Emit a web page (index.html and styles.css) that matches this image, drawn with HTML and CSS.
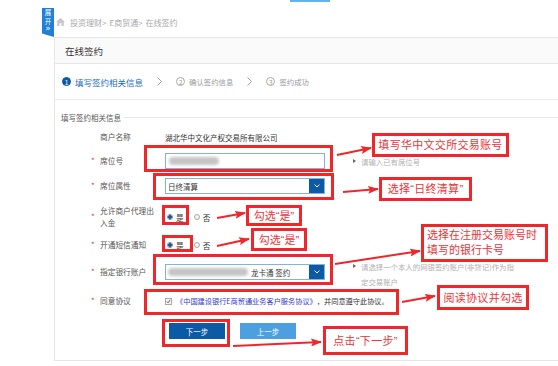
FILE: index.html
```html
<!DOCTYPE html>
<html lang="zh-CN">
<head>
<meta charset="utf-8">
<title>在线签约</title>
<link rel="stylesheet" href="styles.css">
</head>
<body>
<div class="page">
  <div class="topline"></div>
  <div class="fold"><span>展</span><span>开</span><span class="fold-arrow">»</span></div>
  <div class="crumb">
    <svg class="home" viewBox="0 0 10 9" width="9" height="8"><path d="M5 0 L10 4.6 H8.6 V9 H6.2 V6 H3.8 V9 H1.4 V4.6 H0 Z" fill="#c6c6c6"/></svg>
    <span>投资理财&gt;</span><span>E商贸通&gt;</span><span>在线签约</span>
  </div>
  <div class="panel">
    <div class="panel-head">在线签约</div>
    <div class="steps">
      <span class="step active"><i>1</i>填写签约相关信息</span>
      <svg class="chev" viewBox="0 0 5 9" width="5" height="9"><polyline points="0.5,0.5 4.5,4.5 0.5,8.5" fill="none" stroke="#9a9a9a" stroke-width="0.9"/></svg>
      <span class="step"><i>2</i>确认签约信息</span>
      <svg class="chev" viewBox="0 0 5 9" width="5" height="9"><polyline points="0.5,0.5 4.5,4.5 0.5,8.5" fill="none" stroke="#9a9a9a" stroke-width="0.9"/></svg>
      <span class="step"><i>3</i>签约成功</span>
    </div>
    <div class="section">
      <div class="legend"><span>填写签约相关信息</span></div>
      <div class="form">
        <span class="star"></span><span class="label">商户名称</span><span class="value">湖北华中文化产权交易所有限公司</span><span class="hint"></span>

        <span class="star">*</span><span class="label">席位号</span>
        <span class="input"><span class="blur blur-seat"></span></span>
        <span class="hint"><b class="tri"></b>请输入已有席位号</span>

        <span class="star">*</span><span class="label">席位属性</span>
        <span class="select"><span class="sel-text">日终清算</span><span class="dd"><svg viewBox="0 0 6 4" width="6" height="4"><polyline points="0.6,0.6 3,3 5.4,0.6" fill="none" stroke="#fff" stroke-width="1"/></svg></span></span>
        <span class="hint"></span>

        <span class="star">*</span><span class="label two">允许商户代理出<br>入金</span>
        <span class="radios"><span class="radio on"></span>是<span class="radio off"></span>否</span>
        <span class="hint"></span>

        <span class="star">*</span><span class="label">开通短信通知</span>
        <span class="radios"><span class="radio on"></span>是<span class="radio off"></span>否</span>
        <span class="hint"></span>

        <span class="star">*</span><span class="label">指定银行账户</span>
        <span class="select"><span class="blur blur-bank"></span><span class="sel-text bank">龙卡通 签约</span><span class="dd"><svg viewBox="0 0 6 4" width="6" height="4"><polyline points="0.6,0.6 3,3 5.4,0.6" fill="none" stroke="#fff" stroke-width="1"/></svg></span></span>
        <span class="hint hint-two"><b class="tri"></b><span>请选择一个本人的网银签约账户(非贷记)作为指<br>定交易账户</span></span>

        <span class="star">*</span><span class="label">同意协议</span>
        <span class="agree"><span class="check"><svg viewBox="0 0 6 6" width="5" height="5"><polyline points="1,3 2.5,4.6 5,1" fill="none" stroke="#3a3a3a" stroke-width="0.9"/></svg></span><a class="link">《中国建设银行E商贸通业务客户服务协议》</a>，并同意遵守此协议。</span>
        <span class="hint"></span>
      </div>
      <div class="actions"><span class="btn primary">下一步</span><span class="btn light">上一步</span></div>
    </div>
  </div>

  <div class="notes">
    <div class="hl hl-seat"></div>
    <div class="hl hl-attr"></div>
    <div class="hl hl-r1"></div>
    <div class="hl hl-r2"></div>
    <div class="hl hl-bank"></div>
    <div class="hl hl-agree"></div>
    <div class="hl hl-next"></div>

    <div class="note note-a">填写华中文交所交易账号</div>
    <div class="note note-b">选择“日终清算”</div>
    <div class="note note-c">勾选“是”</div>
    <div class="note note-d">勾选“是”</div>
    <div class="note note-e">选择在注册交易账号时<br>填写的银行卡号</div>
    <div class="note note-f">阅读协议并勾选</div>
    <div class="note note-g">点击“下一步”</div>

    <svg class="arrows" viewBox="0 0 558 366" width="558" height="366">
      <defs>
        <marker id="ah" viewBox="0 0 11 8" markerWidth="11" markerHeight="8" refX="10" refY="4" orient="auto" markerUnits="userSpaceOnUse">
          <path d="M0 0 L11 4 L0 8 L2 4 Z" fill="#f0262b"/>
        </marker>
      </defs>
      <g stroke="#f0262b" stroke-width="2" marker-end="url(#ah)">
        <line x1="337" y1="155" x2="371" y2="148"/>
        <line x1="343" y1="192" x2="378" y2="189"/>
        <line x1="217" y1="218" x2="245" y2="213"/>
        <line x1="217" y1="246" x2="249" y2="239"/>
        <line x1="335" y1="264" x2="420" y2="251"/>
        <line x1="402" y1="302" x2="435" y2="296"/>
        <line x1="233" y1="346" x2="321" y2="342"/>
      </g>
    </svg>
  </div>
</div>
</body>
</html>
```

FILE: styles.css
```css
* { box-sizing: border-box; margin: 0; padding: 0; }
body {
  margin: 0;
  background: #fff;
  font-family: "Noto Sans CJK SC", "Noto Sans", sans-serif;
  color: #333;
}
.page {
  position: relative;
  width: 558px;
  height: 366px;
  overflow: hidden;
}
.topline {
  margin-left: 290px;
  width: 40px;
  height: 2px;
  background: #62b3ec;
}
.fold {
  position: absolute;
  left: 42px;
  top: 8px;
  width: 12px;
  height: 29px;
  background: #1f80d6;
  clip-path: polygon(0 0, 100% 0, 100% 100%, 0 88%);
  display: flex;
  flex-direction: column;
  align-items: center;
  color: #fff;
  font-size: 6.5px;
  line-height: 8.5px;
  padding-top: 0;
}
.fold-arrow { font-size: 8px; line-height: 8px; font-family: "DejaVu Sans", sans-serif; }
.crumb {
  height: 35px;
  padding: 5px 0 0 56px;
  display: flex;
  align-items: center;
  gap: 3px;
  font-size: 8px;
  color: #a8a8a8;
}
.home { margin-right: 2px; }
.panel {
  margin-left: 54px;
  height: 324px;
  border: 1px solid #e6e6e6;
  border-right: 0;
}
.panel-head {
  height: 26px;
  background: #fafafa;
  border-bottom: 1px solid #e6e6e6;
  display: flex;
  align-items: center;
  padding-left: 10px;
  font-size: 9.5px;
  color: #333;
}
.steps {
  height: 36px;
  border-bottom: 1px solid #ececec;
  display: flex;
  align-items: center;
  padding-left: 7px;
}
.step {
  display: flex;
  align-items: center;
  color: #9a9a9a;
  font-size: 7.4px;
}
.step i {
  font-style: normal;
  width: 9px;
  height: 9px;
  border-radius: 50%;
  border: 1px solid #aaa;
  display: flex;
  align-items: center;
  justify-content: center;
  font-size: 6.5px;
  margin-right: 4px;
  color: #999;
}
.step.active { color: #1b6dbf; font-size: 8.5px; }
.step.active i { background: #0b5aa6; border-color: #0b5aa6; color: #fff; }
.chev { margin: 0 14px; }

.section { padding: 11px 0 0 6px; }
.legend {
  display: flex;
  align-items: center;
  height: 12px;
  font-size: 7.5px;
  color: #555;
}
.legend::after {
  content: "";
  flex: 1;
  height: 1px;
  background: #e8e8e8;
  margin-left: 3px;
}
.form {
  display: grid;
  grid-template-columns: 10px 65px 160px 1fr;
  grid-template-rows: 20px 28px 22px 40px 16px 38px 20px;
  margin: 4px 0 0 29px;
  align-items: center;
  font-size: 7.7px;
  color: #555;
}
.star { color: #e8353a; font-size: 8px; padding-left: 1px; line-height: 8px; }
.label { line-height: 12px; }
.value { color: #333; font-size: 7.5px; white-space: nowrap; }
.hint {
  padding-left: 28px;
  font-size: 7.4px;
  color: #b0b0b0;
  display: flex;
  align-items: center;
  line-height: 15px;
}
.hint-two { align-items: flex-start; padding-top: 3px; }
.tri {
  width: 0;
  height: 0;
  border-top: 2.5px solid transparent;
  border-bottom: 2.5px solid transparent;
  border-left: 3px solid #666;
  margin-right: 5px;
}
.hint-two .tri { margin-top: 5px; }
.input {
  position: relative;
  height: 16px;
  border: 1px solid #86b0de;
  background: #fff;
}
.blur {
  display: block;
  background: #c4c4c4;
  filter: blur(1.6px);
  border-radius: 4px;
}
.blur-seat { position: absolute; left: 3px; top: 3px; width: 50px; height: 8px; }
.select {
  height: 16px;
  border: 1px solid #86b0de;
  display: flex;
  align-items: center;
  padding-left: 2px;
  font-size: 7.5px;
  color: #333;
}
.blur-bank { width: 80px; height: 8px; margin-right: 3px; }
.dd {
  margin-left: auto;
  width: 15px;
  height: 100%;
  background: #0b5aa6;
  display: flex;
  align-items: center;
  justify-content: center;
}
.radios {
  display: flex;
  align-items: center;
  color: #333;
  font-size: 7.7px;
  padding-left: 2px;
}
.radio {
  width: 6px;
  height: 6px;
  border-radius: 50%;
  border: 1px solid #aaa;
  margin-right: 3px;
  background: #f4f4f4;
}
.radio.on { border-color: #888; background: radial-gradient(circle, #0b5aa6 0 1.6px, #fff 1.9px); }
.radio.off { margin-left: 10px; }
.agree {
  display: flex;
  align-items: center;
  white-space: nowrap;
  font-size: 7.2px;
  color: #333;
}
.check {
  width: 7px;
  height: 7px;
  border: 1px solid #aaa;
  background: #f2f2f2;
  display: flex;
  align-items: center;
  justify-content: center;
  margin-right: 4px;
}
.link { color: #3238d0; }
.actions {
  display: flex;
  gap: 15px;
  margin: 12px 0 0 108px;
}
.btn {
  width: 56px;
  height: 16px;
  font-size: 7.5px;
  color: #fff;
  display: flex;
  align-items: center;
  justify-content: center;
}
.primary { background: #0b5aa6; }
.light { background: #4ca0e0; }

/* annotation layer */
.notes { position: absolute; inset: 0; pointer-events: none; }
.arrows { position: absolute; left: 0; top: 0; }
.hl { position: absolute; border: 3px solid #f0262b; }
.hl-seat { left: 144px; top: 145px; width: 189px; height: 27px; }
.hl-attr { left: 153px; top: 173px; width: 181px; height: 27px; }
.hl-r1 { left: 162px; top: 205px; width: 27px; height: 20px; }
.hl-r2 { left: 162px; top: 235px; width: 31px; height: 17px; }
.hl-bank { left: 153px; top: 254px; width: 180px; height: 31px; }
.hl-agree { left: 144px; top: 289px; width: 255px; height: 26px; }
.hl-next { left: 162px; top: 319px; width: 68px; height: 28px; }
.note {
  position: absolute;
  border: 3px solid #f0262b;
  background: #fff;
  color: #ec3338;
  font-family: "Liberation Sans", "Noto Sans CJK SC", sans-serif;
  font-size: 11px;
  line-height: 14px;
  letter-spacing: 0.3px;
  display: flex;
  align-items: center;
  justify-content: center;
  white-space: nowrap;
}
.note-a { left: 372px; top: 133px; width: 137px; height: 24px; }
.note-b { left: 379px; top: 177px; width: 93px; height: 24px; }
.note-c { left: 246px; top: 205px; width: 56px; height: 21px; letter-spacing: 0; }
.note-d { left: 251px; top: 228px; width: 56px; height: 23px; letter-spacing: 0; }
.note-e { left: 421px; top: 224px; width: 127px; height: 38px; justify-content: flex-start; padding-left: 3px; line-height: 15px; letter-spacing: 0; }
.note-f { left: 437px; top: 285px; width: 92px; height: 25px; }
.note-g { left: 323px; top: 326px; width: 85px; height: 29px; }
```
